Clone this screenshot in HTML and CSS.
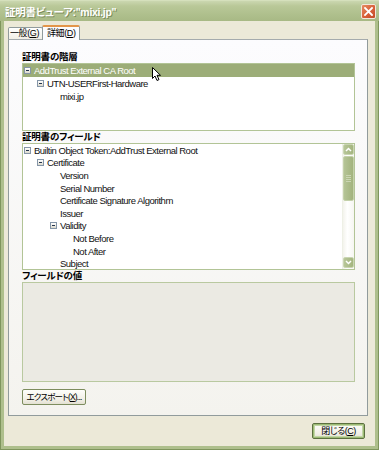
FILE: index.html
```
<!DOCTYPE html>
<html lang="ja">
<head>
<meta charset="utf-8">
<title>証明書ビューア</title>
<link rel="stylesheet" href="styles.css">
</head>
<body>
<div class="window">
  <div class="titlebar">
    <span class="title">証明書ビューア:"mixi.jp"</span>
    <span class="close-btn">
      <svg width="9" height="9" viewBox="0 0 9 9"><path d="M1 1 L8 8 M8 1 L1 8" stroke="#fff" stroke-width="1.8" fill="none" stroke-linecap="square"/></svg>
    </span>
  </div>
  <div class="frame">
    <div class="client">
      <div class="tabs">
        <div class="tab">一般(<u>G</u>)</div>
        <div class="tab sel">詳細(<u>D</u>)</div>
      </div>
      <div class="panel">
        <div class="label">証明書の階層</div>
        <div class="tree t1">
          <div class="rows">
            <div class="row sel l0"><span class="tw"></span><span class="tx">AddTrust External CA Root</span></div>
            <div class="row l1"><span class="tw"></span><span class="tx">UTN-USERFirst-Hardware</span></div>
            <div class="row l2"><span class="sp"></span><span class="tx">mixi.jp</span></div>
          </div>
        </div>
        <div class="label">証明書のフィールド</div>
        <div class="tree t2">
          <div class="rows">
            <div class="row l0"><span class="tw"></span><span class="tx">Builtin Object Token:AddTrust External Root</span></div>
            <div class="row l1"><span class="tw"></span><span class="tx">Certificate</span></div>
            <div class="row l2"><span class="sp"></span><span class="tx">Version</span></div>
            <div class="row l2"><span class="sp"></span><span class="tx">Serial Number</span></div>
            <div class="row l2"><span class="sp"></span><span class="tx">Certificate Signature Algorithm</span></div>
            <div class="row l2"><span class="sp"></span><span class="tx">Issuer</span></div>
            <div class="row l2"><span class="tw"></span><span class="tx">Validity</span></div>
            <div class="row l3"><span class="sp"></span><span class="tx">Not Before</span></div>
            <div class="row l3"><span class="sp"></span><span class="tx">Not After</span></div>
            <div class="row l2"><span class="sp"></span><span class="tx">Subject</span></div>
          </div>
          <div class="vscroll">
            <div class="sb-btn">
              <svg width="7" height="5" viewBox="0 0 7 5"><path d="M1 4 L3.5 1.5 L6 4" stroke="#fff" stroke-width="1.5" fill="none"/></svg>
            </div>
            <div class="thumb"><span class="grip"></span></div>
            <div class="track"></div>
            <div class="sb-btn">
              <svg width="7" height="5" viewBox="0 0 7 5"><path d="M1 1 L3.5 3.5 L6 1" stroke="#fff" stroke-width="1.5" fill="none"/></svg>
            </div>
          </div>
        </div>
        <div class="label">フィールドの値</div>
        <div class="valuebox"></div>
        <div class="btn-row">
          <div class="btn export">エクスポート(<u>X</u>)...</div>
        </div>
      </div>
      <div class="footer">
        <div class="btn default">閉じる(<u>C</u>)</div>
      </div>
    </div>
  </div>
  <svg class="cursor" width="10" height="15" viewBox="0 0 10 15">
    <path d="M0.5 0.5 L0.5 11.5 L3 9 L5 13.5 L7 12.6 L5 8.3 L8.5 8.3 Z" fill="#fff" stroke="#000" stroke-width="1" stroke-linejoin="miter"/>
  </svg>
</div>
</body>
</html>
```
FILE: styles.css
```
html, body {
  margin: 0;
  padding: 0;
}
body {
  width: 379px;
  height: 450px;
  overflow: hidden;
  font-family: "Liberation Sans", "Noto Sans CJK JP", sans-serif;
  font-feature-settings: "palt";
  color: #000;
}
.window {
  position: relative;
  width: 379px;
  height: 450px;
  box-sizing: border-box;
  border: 1px solid #7f955d;
  border-top: none;
  background: #aebf8c;
  display: flex;
  flex-direction: column;
}
.titlebar {
  height: 21px;
  flex: none;
  margin: 0 -1px;
  background: linear-gradient(#cbd7b0 0%, #b9c898 25%, #aebf8c 70%, #a8b985 100%);
  border-top: 1px solid #d5e0bc;
  box-sizing: border-box;
  display: flex;
  align-items: center;
  justify-content: space-between;
  padding: 0 3px 0 5px;
}
.title {
  font-size: 10.5px;
  font-weight: bold;
  color: #fff;
  text-shadow: 1px 1px 0 #7b8c5c;
  white-space: nowrap;
  letter-spacing: -0.3px;
}
.close-btn {
  width: 15px;
  height: 15px;
  box-sizing: border-box;
  border: 1px solid #f2e7dc;
  border-radius: 2px;
  background: linear-gradient(135deg, #e58b62 0%, #d8603a 55%, #c34a27 100%);
  display: flex;
  align-items: center;
  justify-content: center;
  margin-top: 1px;
}
.frame {
  flex: 1;
  display: flex;
  padding: 0 3px 3px 3px;
  min-height: 0;
}
.client {
  flex: 1;
  background: #ece9d8;
  display: flex;
  flex-direction: column;
  padding: 4px 7px 0 4px;
  min-height: 0;
}
.tabs {
  height: 14px;
  flex: none;
  display: flex;
  align-items: flex-end;
  position: relative;
  z-index: 2;
  font-size: 9px;
}
.tab {
  height: 12px;
  box-sizing: border-box;
  border: 1px solid #919b9c;
  border-bottom: none;
  border-radius: 2px 2px 0 0;
  background: linear-gradient(#ffffff, #f1efe6);
  white-space: nowrap;
  width: 35px;
  padding-left: 1px;
  line-height: 11px;
  letter-spacing: -0.4px;
}
.tab.sel {
  width: 38px;
  height: 15px;
  margin-bottom: -1px;
  margin-left: -1px;
  padding-left: 4px;
  background: #fcfcfe;
  border-top: 2px solid #e3954a;
  line-height: 12px;
}
.panel {
  flex: 1;
  min-height: 0;
  border: 1px solid #919b9c;
  border-top-color: #a5abad;
  background: linear-gradient(#fcfcfe, #f4f3ee);
  display: flex;
  flex-direction: column;
  padding: 11px 12px 0 13px;
}
.label {
  font-size: 9.5px;
  font-weight: bold;
  height: 11px;
  line-height: 11px;
  margin-bottom: 1px;
  letter-spacing: -0.2px;
  flex: none;
  white-space: nowrap;
}
.tree {
  border: 1px solid #b2c496;
  background: #fff;
  display: flex;
  overflow: hidden;
  flex: none;
  box-sizing: border-box;
}
.t1 { height: 68px; }
.t2 { height: 127px; }
.rows {
  flex: 1;
  overflow: hidden;
  min-width: 0;
}
.row {
  height: 12.6px;
  display: flex;
  align-items: center;
  font-size: 9.5px;
  letter-spacing: -0.5px;
  white-space: nowrap;
  color: #111;
}
.t1 .row { height: 13px; }
.row.sel {
  background: #9cad78;
  color: #fff;
}
.l0 { padding-left: 1px; }
.l1 { padding-left: 14px; }
.l2 { padding-left: 27px; }
.l3 { padding-left: 40px; }
.tw, .sp {
  width: 7px;
  height: 7px;
  margin-right: 3px;
  flex: none;
  box-sizing: border-box;
}
.tw {
  border: 1px solid #8596a8;
  background: linear-gradient(#ffffff, #dcd9cc);
  position: relative;
}
.tw::after {
  content: "";
  position: absolute;
  left: 1px;
  top: 2px;
  width: 3px;
  height: 1px;
  background: #23344e;
}
.vscroll {
  width: 11px;
  flex: none;
  display: flex;
  flex-direction: column;
  background: linear-gradient(90deg, #f3f3ec, #ffffff 40%, #f6f6f1);
  border-left: 1px solid #eef0e6;
}
.sb-btn {
  height: 11px;
  flex: none;
  background: linear-gradient(90deg, #b7c698, #a4b57f);
  border: 1px solid #c9d5b2;
  border-radius: 2px;
  box-sizing: border-box;
  display: flex;
  align-items: center;
  justify-content: center;
}
.sb-btn:last-child { margin-bottom: 1px; }
.thumb {
  height: 45px;
  flex: none;
  margin-top: 1px;
  background: linear-gradient(90deg, #b5c496, #a2b37d);
  border: 1px solid #c4d1aa;
  border-radius: 2px;
  box-sizing: border-box;
  display: flex;
  align-items: center;
  justify-content: center;
}
.grip {
  width: 5px;
  height: 7px;
  background: repeating-linear-gradient(#cbd6b4 0 1px, transparent 1px 2px);
}
.track { flex: 1; }
.valuebox {
  height: 100px;
  flex: none;
  box-sizing: border-box;
  border: 1px solid #b9c9a0;
  background: #ebeae3;
}
.btn-row {
  display: flex;
  margin-top: 7px;
}
.btn {
  height: 16px;
  box-sizing: border-box;
  border: 1px solid #7d8d5e;
  border-radius: 2px;
  background: linear-gradient(#fefefb, #f1efe5 70%, #e3e0d2);
  font-size: 9px;
  text-align: center;
  white-space: nowrap;
  line-height: 14px;
  letter-spacing: -0.5px;
}
.export {
  width: 64px;
  font-size: 8.5px;
  letter-spacing: -0.8px;
}
.footer {
  height: 30px;
  flex: none;
  display: flex;
  justify-content: flex-end;
  align-items: flex-start;
  padding: 7px 3px 0 0;
  box-sizing: border-box;
}
.btn.default {
  width: 53px;
  border-color: #5c7140;
  box-shadow: inset 0 0 0 1px #9dbb75, inset 0 0 0 2px #c2d6a6;
}
.cursor {
  position: absolute;
  left: 151px;
  top: 67px;
}
```
